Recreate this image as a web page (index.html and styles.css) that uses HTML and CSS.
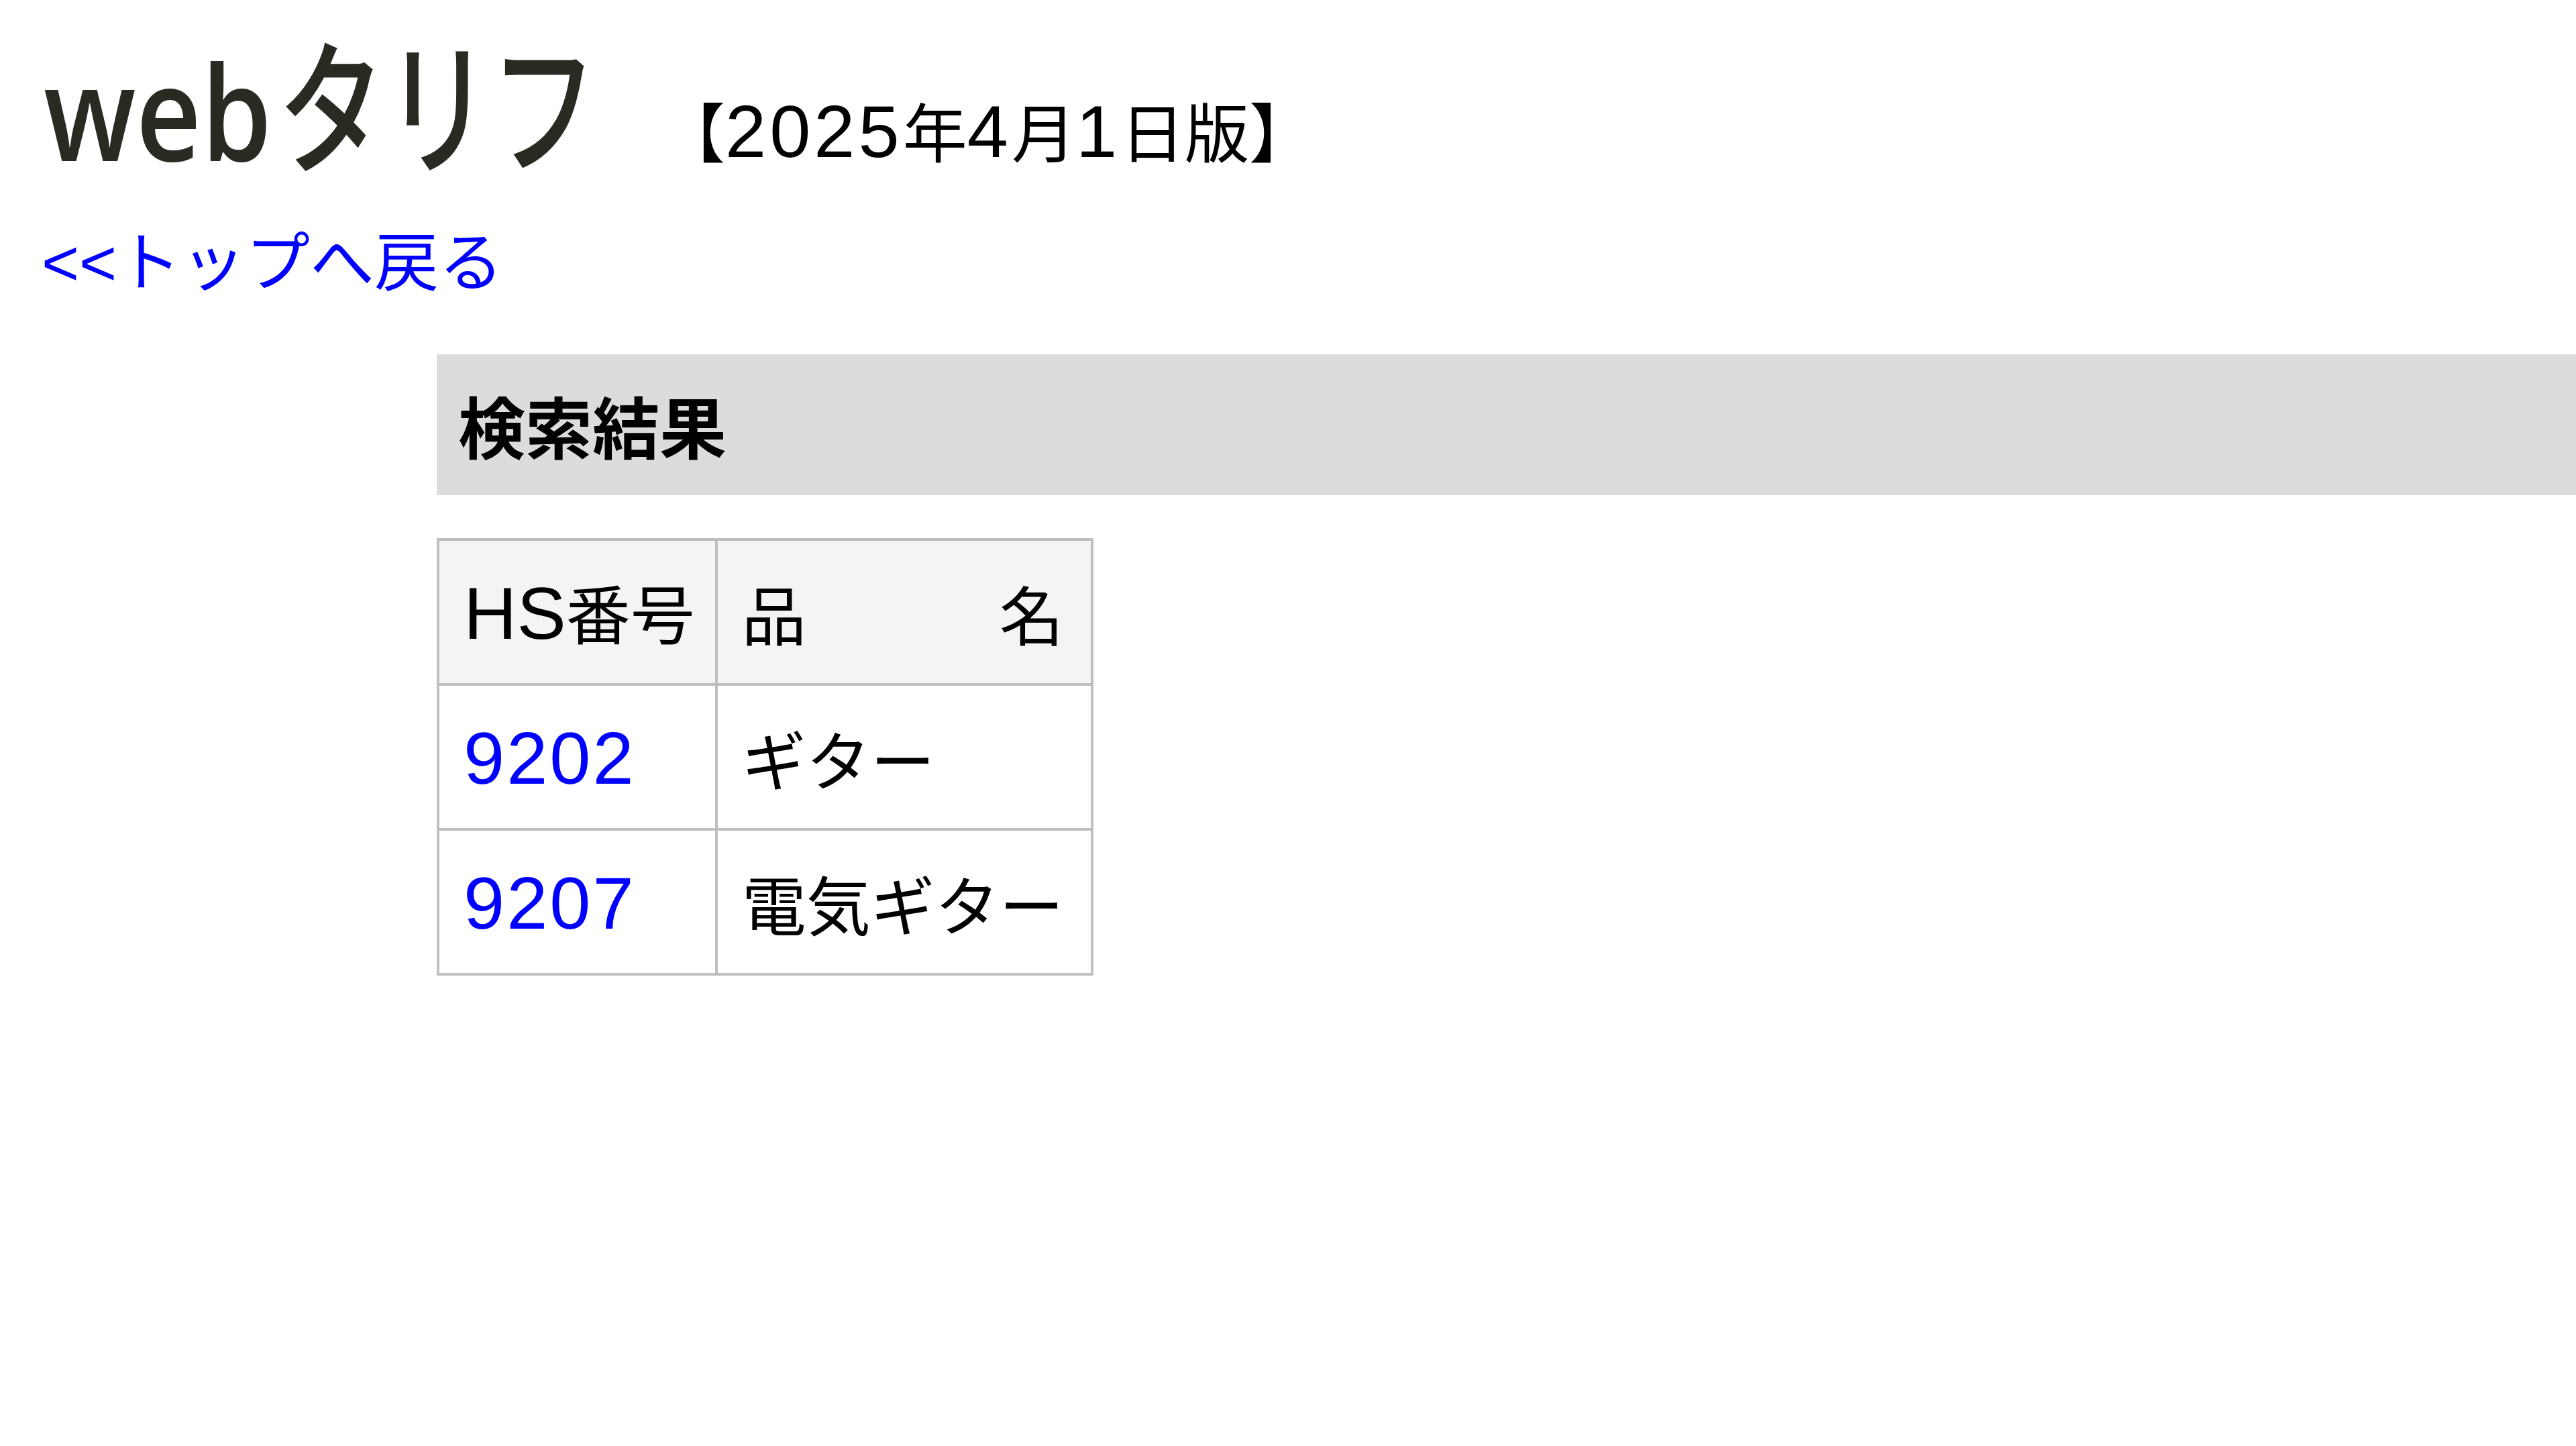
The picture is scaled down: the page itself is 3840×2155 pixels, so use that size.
FILE: index.html
```html
<!DOCTYPE html>
<html lang="ja">
<head>
<meta charset="utf-8">
<title>webタリフ 検索結果</title>
<link rel="stylesheet" href="styles.css">
</head>
<body>
<div class="page">
  <header class="masthead">
    <svg class="logo" width="830" height="290" viewBox="0 0 830 290" xmlns="http://www.w3.org/2000/svg">
      <text><tspan class="logo-web" x="5" y="240" textLength="340" lengthAdjust="spacingAndGlyphs">web</tspan><tspan class="logo-kana" x="355" y="242" textLength="475" lengthAdjust="spacingAndGlyphs">タリフ</tspan></text>
    </svg>
    <p class="edition">【<span class="lat num">2025</span>年<span class="lat num">4</span>月<span class="lat num">1</span>日版】</p>
  </header>
  <nav class="back"><a href="#"><span class="lat-plain">&lt;&lt;</span>トップへ戻る</a></nav>
  <main class="results">
    <h2 class="results-title">検索結果</h2>
    <table class="hs-table">
      <thead>
        <tr>
          <th class="col-code"><span class="lat">HS</span>番号</th>
          <th class="col-name"><div class="spread"><span>品</span><span>名</span></div></th>
        </tr>
      </thead>
      <tbody>
        <tr>
          <td class="col-code"><a class="lat num" href="#">9202</a></td>
          <td class="col-name">ギター</td>
        </tr>
        <tr>
          <td class="col-code"><a class="lat num" href="#">9207</a></td>
          <td class="col-name">電気ギター</td>
        </tr>
      </tbody>
    </table>
  </main>
</div>
</body>
</html>
```
FILE: styles.css
```css
html, body {
  margin: 0;
  padding: 0;
  background: #ffffff;
}

body {
  font-family: "Noto Sans CJK JP", "Liberation Sans", sans-serif;
  font-size: 96px;
  line-height: 144px;
  color: #000000;
}

.page {
  padding-left: 62px;
}

.lat {
  font-family: "Liberation Sans", "Noto Sans CJK JP", sans-serif;
  font-size: 110px;
}

.num {
  letter-spacing: 3px;
}

.edition .num {
  letter-spacing: 5px;
}

.lat-plain {
  font-family: "Liberation Sans", "Noto Sans CJK JP", sans-serif;
}

a {
  color: #0000ff;
  text-decoration: none;
}

/* masthead */
.masthead {
  display: flex;
  align-items: flex-start;
}

.logo {
  display: block;
  margin-left: -2px;
  flex: none;
  overflow: visible;
}

.logo-web {
  font-family: "Open Sans", "DejaVu Sans", sans-serif;
  font-size: 195px;
  font-weight: 600;
  fill: #2a2a22;
}

.logo-kana {
  font-family: "Noto Sans CJK JP", sans-serif;
  font-size: 215px;
  font-weight: 400;
  fill: #2a2a22;
  stroke: #2a2a22;
  stroke-width: 5px;
}

.edition {
  margin: 121px 0 0 95px;
  white-space: nowrap;
}

/* back link */
.back {
  margin-top: 22px;
}

/* results */
.results {
  margin-left: 589px;
  margin-top: 64px;
}

.results-title {
  margin: 0;
  height: 210px;
  display: flex;
  align-items: center;
  padding-left: 32px;
  background: #dcdcdc;
  font-size: 100px;
  font-weight: 700;
}

.hs-table {
  margin-top: 64px;
  border-collapse: collapse;
  border: 4px solid #bfbfbf;
}

.hs-table th,
.hs-table td {
  border: 4px solid #bfbfbf;
  padding: 36px;
  line-height: 137px;
  font-weight: 400;
  text-align: left;
  white-space: nowrap;
}

.hs-table th {
  background: #f4f4f4;
}

.hs-table .col-code {
  padding-right: 30px;
}

.hs-table .col-name {
  padding-right: 40px;
}

.spread {
  display: flex;
  justify-content: space-between;
}
```
